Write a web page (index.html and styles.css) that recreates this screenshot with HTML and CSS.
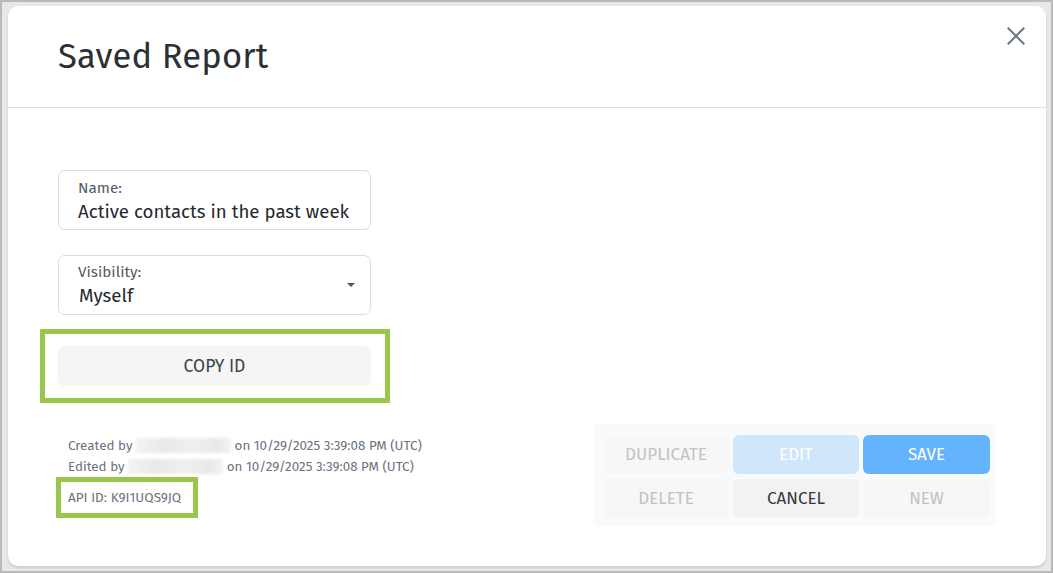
FILE: index.html
```html
<!DOCTYPE html>
<html>
<head>
<meta charset="utf-8">
<link rel="stylesheet" href="styles.css">
</head>
<body>
<div class="frame">
  <div class="modal">
    <div class="header">
      <h1 class="title">Saved Report</h1>
      <button class="close" aria-label="Close">
        <svg width="18" height="18" viewBox="0 0 18 18"><path d="M1.5 1.5 L16.5 16.5 M16.5 1.5 L1.5 16.5" stroke="#6e7c81" stroke-width="2.2" stroke-linecap="square"/></svg>
      </button>
    </div>
    <div class="body">
      <div class="left">
        <div class="field">
          <div class="label">Name:</div>
          <div class="value">Active contacts in the past week</div>
        </div>
        <div class="field select">
          <div>
            <div class="label">Visibility:</div>
            <div class="value">Myself</div>
          </div>
          <span class="caret"></span>
        </div>
        <div class="highlight copy-wrap">
          <button class="copy">COPY ID</button>
        </div>
        <div class="meta">
          <div class="line">Created by <span class="blur w1"></span> on 10/29/2025 3:39:08 PM (UTC)</div>
          <div class="line">Edited by <span class="blur w2"></span> on 10/29/2025 3:39:08 PM (UTC)</div>
          <div class="highlight api">API ID: K9I1UQS9JQ</div>
        </div>
      </div>
      <div class="actions">
        <button class="btn faint">DUPLICATE</button>
        <button class="btn edit">EDIT</button>
        <button class="btn save">SAVE</button>
        <button class="btn faint">DELETE</button>
        <button class="btn cancel">CANCEL</button>
        <button class="btn faint">NEW</button>
      </div>
    </div>
  </div>
</div>
</body>
</html>
```

FILE: styles.css
```css
* { box-sizing: border-box; }
html, body { margin: 0; padding: 0; }
body {
  width: 1053px;
  height: 573px;
  overflow: hidden;
  font-family: "Fira Sans", "Open Sans", "Noto Sans", sans-serif;
  background: #bababa;
}
.frame {
  margin: 2px;
  height: 569px;
  background: #e8e8ec;
  padding: 4px 5px 5px 6px;
}
.modal {
  height: 560px;
  background: #fff;
  border-radius: 10px;
  box-shadow: 0 2px 3px rgba(0,0,0,0.12);
  display: flex;
  flex-direction: column;
}
.header {
  height: 102px;
  border-bottom: 1px solid #dedede;
  display: flex;
  justify-content: space-between;
  align-items: flex-start;
  padding: 0 21px 0 50px;
}
.title {
  margin: 31px 0 0 0;
  font-size: 34.5px;
  line-height: 40px;
  font-weight: 400;
  color: #2b3034;
  letter-spacing: 0.2px;
}
.close {
  margin-top: 21px;
  border: 0;
  background: none;
  padding: 0;
  width: 18px;
  height: 18px;
  cursor: pointer;
}
.body {
  flex: 1;
  display: flex;
  justify-content: space-between;
  padding: 62px 50px 0 32px;
}
.left {
  width: 350px;
  display: flex;
  flex-direction: column;
}
.field {
  margin-left: 18px;
  width: 313px;
  height: 60px;
  border: 1px solid #dcdcdc;
  border-radius: 7px;
  padding: 8px 19px 0 19px;
}
.field + .field { margin-top: 25px; }
.select {
  display: flex;
  justify-content: space-between;
  align-items: center;
  padding-top: 3px;
}
.label {
  font-size: 15.3px;
  color: #555a5e;
  line-height: 19px;
}
.value {
  font-size: 18.7px;
  color: #24292d;
  line-height: 28px;
}
.select .value { margin-left: 1px; }
.caret {
  width: 0; height: 0;
  border-left: 4px solid transparent;
  border-right: 4px solid transparent;
  border-top: 4px solid #555;
  margin-right: -4px;
  margin-top: -3px;
}
.highlight {
  border: 5px solid #9cc54b;
}
.copy-wrap {
  margin-top: 14px;
  width: 350px;
  height: 74px;
  padding: 12px 13px 12px 13px;
}
.copy {
  width: 313px;
  height: 40px;
  border: 0;
  border-radius: 7px;
  background: #f5f5f5;
  font-family: inherit;
  font-size: 17.5px;
  color: #3d4246;
}
.meta {
  margin-top: 32px;
  padding-left: 28px;
  font-size: 13.4px;
  color: #6b7280;
}
.line {
  line-height: 21px;
  white-space: nowrap;
}
.blur {
  display: inline-block;
  height: 15px;
  vertical-align: -3px;
  background: linear-gradient(90deg, #f3f3f3, #e9e9ea 30%, #f0f0f1 60%, #e8e8e9 85%, #f4f4f4);
  filter: blur(1.5px);
}
.w1 { width: 95px; }
.w2 { width: 95px; }
.api {
  margin-top: 0;
  margin-left: -12px;
  width: 142px;
  height: 41px;
  padding: 7px 0 0 7px;
  font-size: 13.5px;
  color: #6b7280;
}
.actions {
  margin-top: 254px;
  width: 403px;
  height: 102px;
  background: #fafafa;
  border-radius: 3px;
  padding: 11px 6px 8px 10px;
  display: grid;
  grid-template-columns: 126px 126px 127px;
  grid-template-rows: 39px 39px;
  gap: 5px 4px;
}
.btn {
  border: 0;
  border-radius: 6px;
  font-family: inherit;
  font-size: 17px;
  padding: 0;
}
.faint { background: #f7f7f7; color: #c2c2c2; }
.edit { background: #d0e6fb; color: #fff; }
.save { background: #64b4fd; color: #fff; }
.cancel { background: #f2f2f2; color: #353a3e; }
```
